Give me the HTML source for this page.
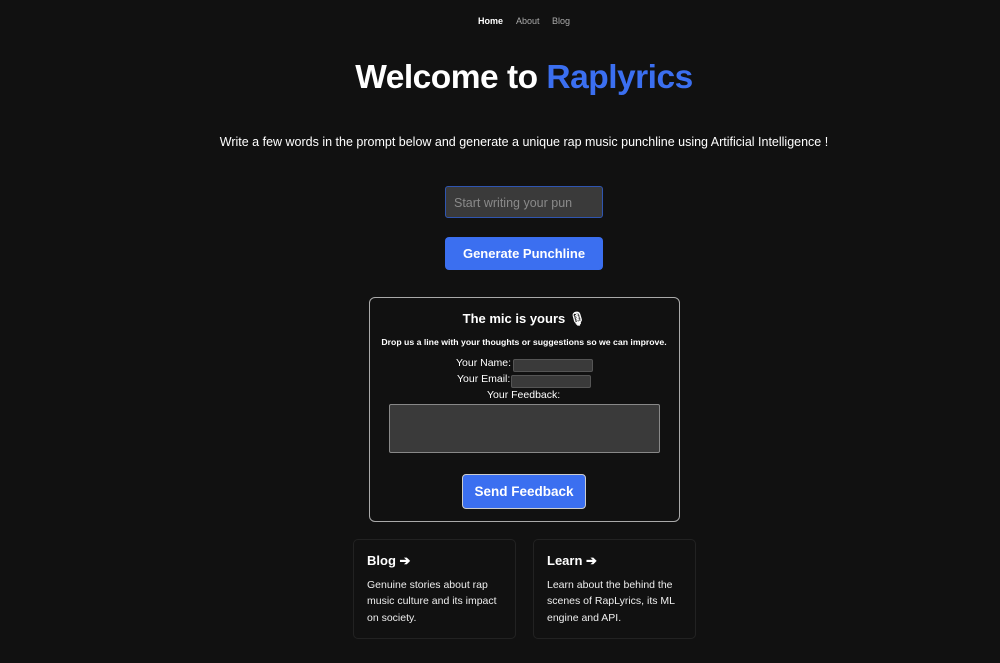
<!DOCTYPE html>
<html><head><style>
body{margin:0;width:1000px;height:663px;background:#111111;font-family:"Liberation Sans",sans-serif;color:#fff;position:relative;overflow:hidden}
.a{position:absolute}
.c{text-align:center;left:24px;width:1000px}
</style></head><body>
<div class="a" style="top:16px;left:478px;font-size:9px;font-weight:bold">Home</div>
<div class="a" style="top:16px;left:516px;font-size:9px;color:#aaa">About</div>
<div class="a" style="top:16px;left:552px;font-size:9px;color:#aaa">Blog</div>
<div class="a c" style="top:59px;font-size:33.5px;font-weight:bold;letter-spacing:-0.5px">Welcome to <span style="color:#3b6ff0">Raplyrics</span></div>
<div class="a c" style="top:135px;font-size:12.5px">Write a few words in the prompt below and generate a unique rap music punchline using Artificial Intelligence !</div>
<div class="a" style="left:445px;top:186px;width:156px;height:30px;background:#3a3a3a;border:1px solid #2f55b0;border-radius:3px"><div style="padding:9px 0 0 8px;font-size:12.5px;color:#8a8a8a">Start writing your pun</div></div>
<div class="a" style="left:445px;top:237px;width:158px;height:33px;background:#3b6ff0;border-radius:4px;text-align:center;line-height:33px;font-size:13px;font-weight:bold">Generate Punchline</div>
<div class="a" style="left:369px;top:297px;width:309px;height:223px;border:1px solid #aaa;border-radius:6px"></div>
<div class="a c" style="top:311px;font-size:13px;font-weight:bold">The mic is yours 🎙</div>
<div class="a c" style="top:337px;font-size:8.7px;font-weight:bold">Drop us a line with your thoughts or suggestions so we can improve.</div>
<div class="a" style="left:456px;top:357px;font-size:10.5px">Your Name:</div>
<div class="a" style="left:513px;top:359px;width:78px;height:11px;background:#3a3a3a;border:1px solid #555;border-radius:2px"></div>
<div class="a" style="left:457px;top:373px;font-size:10.5px">Your Email:</div>
<div class="a" style="left:511px;top:375px;width:78px;height:11px;background:#3a3a3a;border:1px solid #555;border-radius:2px"></div>
<div class="a" style="left:487px;top:389px;font-size:10.5px">Your Feedback:</div>
<div class="a" style="left:389px;top:404px;width:269px;height:47px;background:#3a3a3a;border:1px solid #888;border-radius:2px"></div>
<div class="a" style="left:462px;top:474px;width:122px;height:33px;background:#3b6ff0;border:1px solid #ccc;border-radius:4px;text-align:center;line-height:33px;font-size:13.5px;font-weight:bold">Send Feedback</div>
<div class="a" style="left:353px;top:539px;width:161px;height:98px;border:1px solid #222;border-radius:5px"></div>
<div class="a" style="left:533px;top:539px;width:161px;height:98px;border:1px solid #222;border-radius:5px"></div>
<div class="a" style="left:367px;top:553px;font-size:13px;font-weight:bold">Blog ➔</div>
<div class="a" style="left:547px;top:553px;font-size:13px;font-weight:bold">Learn ➔</div>
<div class="a" style="left:367px;top:577px;width:140px;font-size:10.5px;line-height:16.3px;color:#eee">Genuine stories about rap music culture and its impact on society.</div>
<div class="a" style="left:547px;top:577px;width:140px;font-size:10.5px;line-height:16.3px;color:#eee">Learn about the behind the scenes of RapLyrics, its ML engine and API.</div>
</body></html>
